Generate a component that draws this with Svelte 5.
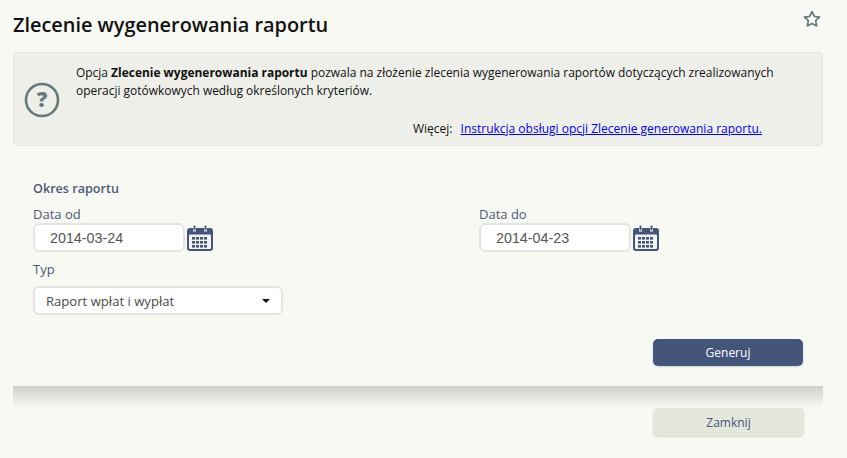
<script>
    let dateFrom = "2014-03-24"
    let dateTo = "2014-04-23"
</script>

{#snippet calendar()}
    <svg class="cal" viewBox="0 0 26 26" width="26" height="26">
        <path fill="#43557b" d="M3 3h3v3.5h3V3h8v3.5h3V3h3a3 3 0 0 1 3 3v17a3 3 0 0 1-3 3H3a3 3 0 0 1-3-3V6a3 3 0 0 1 3-3z"/>
        <rect x="6.5" y="0.5" width="2" height="5" rx="1" fill="#43557b"/>
        <rect x="17.5" y="0.5" width="2" height="5" rx="1" fill="#43557b"/>
        <rect x="2" y="9.5" width="22" height="14.5" rx="1" fill="#f4f5f3"/>
        <g fill="#43557b">
            {#each [12, 16, 20] as y}
                {#each [5, 9, 13, 17] as x}
                    <rect {x} {y} width="3" height="2.6"/>
                {/each}
            {/each}
        </g>
    </svg>
{/snippet}

<div class="page">
    <header class="head">
        <h1>Zlecenie wygenerowania raportu</h1>
        <svg class="star" viewBox="0 0 18 18" width="18" height="18">
            <path fill="none" stroke="#64797c" stroke-width="1.7" stroke-linejoin="round" d="M9 1.6l2.3 4.8 5.2.7-3.8 3.6.9 5.2L9 13.4l-4.6 2.5.9-5.2L1.500 7.100l5.200-.7z"/>
        </svg>
    </header>

    <section class="info">
        <svg class="help" viewBox="0 0 36 36" width="36" height="36">
            <circle cx="18" cy="18" r="16" fill="none" stroke="#64797c" stroke-width="2.6"/>
            <text x="18" y="25" text-anchor="middle" class="help-mark">?</text>
        </svg>
        <div class="info-body">
            <p>Opcja <b>Zlecenie wygenerowania raportu</b> pozwala na złożenie zlecenia wygenerowania raportów dotyczących zrealizowanych operacji gotówkowych według określonych kryteriów.</p>
            <p class="more">Więcej: <a href="#top">Instrukcja obsługi opcji Zlecenie generowania raportu.</a></p>
        </div>
    </section>

    <form class="form">
        <h2>Okres raportu</h2>
        <div class="dates">
            <div class="field">
                <label for="from">Data od</label>
                <div class="date-row">
                    <input id="from" class="date" value={dateFrom} />
                    {@render calendar()}
                </div>
            </div>
            <div class="field">
                <label for="to">Data do</label>
                <div class="date-row">
                    <input id="to" class="date" value={dateTo} />
                    {@render calendar()}
                </div>
            </div>
        </div>
        <div class="field type">
            <span class="label">Typ</span>
            <div class="select">
                <span>Raport wpłat i wypłat</span>
                <i class="caret"></i>
            </div>
        </div>
        <div class="actions">
            <button type="button" class="btn primary">Generuj</button>
        </div>
    </form>

    <div class="divider"></div>

    <footer class="foot">
        <button type="button" class="btn secondary">Zamknij</button>
    </footer>
</div>

<style>
    :global(body) {
        background: #f8f9f2;
    }

    .page {
        width: 847px;
        height: 458px;
        box-sizing: border-box;
        padding: 0 24px 0 13px;
        font-family: "Open Sans", sans-serif;
        font-size: 11.96px;
        color: #111;
        overflow: hidden;
    }

    .head {
        display: flex;
        justify-content: space-between;
        align-items: flex-start;
        height: 52px;
    }

    h1 {
        margin: 11px 0 0;
        font-size: 19.9px;
        line-height: 27px;
        font-weight: 600;
    }

    .star {
        margin: 10px 2px 0 0;
    }

    .info {
        display: flex;
        height: 94px;
        box-sizing: border-box;
        background: #eeefe8;
        border: 1px solid #e3e7e1;
        border-radius: 5px;
        padding: 11px 0 0 10px;
    }

    .help {
        margin: 18px 16px 0 0;
        flex: none;
    }

    .help-mark {
        font-family: "Open Sans", sans-serif;
        font-size: 21px;
        font-weight: 800;
        fill: #64797c;
    }

    .info-body {
        flex: 1;
        padding-right: 30px;
    }

    p {
        margin: 0;
        line-height: 18px;
    }

    .more {
        margin-top: 20px;
        padding-right: 30px;
        text-align: right;
    }

    .more a {
        color: #0000ff;
        font-size: 12px;
        margin-left: 5px;
    }

    .form {
        padding: 34px 20px 0;
    }

    h2 {
        margin: 0;
        font-size: 12.6px;
        line-height: 17px;
        font-weight: 600;
        color: #4c5977;
    }

    .dates {
        display: grid;
        grid-template-columns: 446px 1fr;
        margin-top: 9px;
    }

    label, .label {
        display: block;
        font-size: 13px;
        line-height: 17px;
        color: #4c5977;
    }

    .date-row {
        display: flex;
        align-items: center;
        gap: 2px;
    }

    .date {
        width: 152px;
        height: 29px;
        box-sizing: border-box;
        border: 2px solid #e4e4e2;
        border-radius: 6px;
        background: #fff;
        padding: 0 0 0 15px;
        font-family: "Liberation Sans", sans-serif;
        font-size: 14.3px;
        color: #555;
        outline: none;
    }

    .type {
        margin-top: 9px;
    }

    .select {
        display: flex;
        justify-content: space-between;
        align-items: center;
        width: 250px;
        height: 29px;
        box-sizing: border-box;
        margin-top: 8px;
        border: 2px solid #e4e4e2;
        border-radius: 6px;
        background: #fff;
        padding: 0 11px 0 11px;
        font-size: 13.1px;
        color: #4a4a4a;
    }

    .caret {
        width: 0;
        height: 0;
        border: 4.500px solid transparent;
        border-top: 4.500px solid #111;
        border-bottom: 0;
    }

    .actions {
        display: flex;
        justify-content: flex-end;
        margin: 24px 0 0;
    }

    .btn {
        width: 150px;
        height: 27px;
        border: 0;
        border-radius: 5px;
        font-family: inherit;
        font-size: 12px;
        padding: 0;
    }

    .primary {
        background: #43557b;
        color: #fff;
        box-shadow: 0 1px 2px #d4d6d0;
    }

    .secondary {
        width: 151px;
        height: 28px;
        background: #e5e6dc;
        color: #43557b;
        box-shadow: 0 1px 2px #d4d6d0;
    }

    .divider {
        height: 22px;
        margin-top: 20px;
        background: linear-gradient(#cfd0ca, #f8f9f2);
    }

    .foot {
        display: flex;
        justify-content: flex-end;
        padding: 0 19px;
    }
</style>
